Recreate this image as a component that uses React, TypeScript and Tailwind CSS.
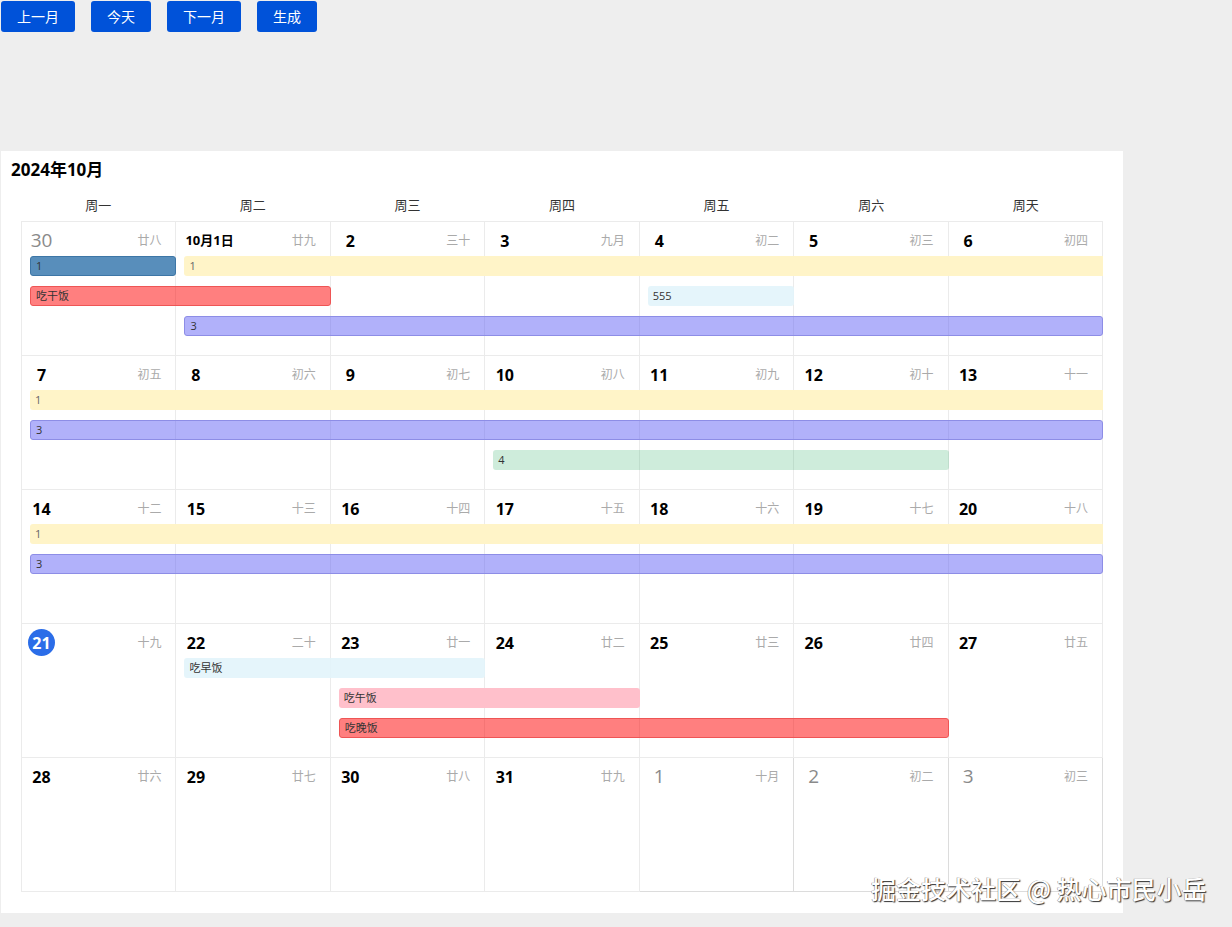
import React from 'react'

type Day = { label: string; lunar: string; kind?: 'other' | 'today' | 'first' }
type Ev = { title: string; start: number; end: number; lane: number; cls: string }

const weeks: Day[][] = [
  [
    { label: '30', lunar: '廿八', kind: 'other' },
    { label: '10月1日', lunar: '廿九', kind: 'first' },
    { label: '2', lunar: '三十' },
    { label: '3', lunar: '九月' },
    { label: '4', lunar: '初二' },
    { label: '5', lunar: '初三' },
    { label: '6', lunar: '初四' },
  ],
  [
    { label: '7', lunar: '初五' },
    { label: '8', lunar: '初六' },
    { label: '9', lunar: '初七' },
    { label: '10', lunar: '初八' },
    { label: '11', lunar: '初九' },
    { label: '12', lunar: '初十' },
    { label: '13', lunar: '十一' },
  ],
  [
    { label: '14', lunar: '十二' },
    { label: '15', lunar: '十三' },
    { label: '16', lunar: '十四' },
    { label: '17', lunar: '十五' },
    { label: '18', lunar: '十六' },
    { label: '19', lunar: '十七' },
    { label: '20', lunar: '十八' },
  ],
  [
    { label: '21', lunar: '十九', kind: 'today' },
    { label: '22', lunar: '二十' },
    { label: '23', lunar: '廿一' },
    { label: '24', lunar: '廿二' },
    { label: '25', lunar: '廿三' },
    { label: '26', lunar: '廿四' },
    { label: '27', lunar: '廿五' },
  ],
  [
    { label: '28', lunar: '廿六' },
    { label: '29', lunar: '廿七' },
    { label: '30', lunar: '廿八' },
    { label: '31', lunar: '廿九' },
    { label: '1', lunar: '十月', kind: 'other' },
    { label: '2', lunar: '初二', kind: 'other' },
    { label: '3', lunar: '初三', kind: 'other' },
  ],
]

const blue = 'bg-[#4682b4]/90 border border-[#3d76a6] rounded-[3px]'
const yellow = 'bg-[#fff4c8] rounded-l-[3px] text-[#666]'
const red = 'bg-[#ff0000]/50 border border-[#e55] rounded-[3px]'
const purple = 'bg-[#6464f5]/50 border border-[#8d8de6] rounded-[3px]'
const cyan = 'bg-[#e2f4fb]/90 rounded-[3px]'
const green = 'bg-[#3cb371]/25 rounded-[3px]'
const pink = 'bg-[#ffc0cb] rounded-[3px]'

const events: Ev[][] = [
  [
    { title: '1', start: 0, end: 0, lane: 0, cls: blue },
    { title: '1', start: 1, end: 6, lane: 0, cls: yellow },
    { title: '吃干饭', start: 0, end: 1, lane: 1, cls: red },
    { title: '555', start: 4, end: 4, lane: 1, cls: cyan },
    { title: '3', start: 1, end: 6, lane: 2, cls: purple },
  ],
  [
    { title: '1', start: 0, end: 6, lane: 0, cls: yellow },
    { title: '3', start: 0, end: 6, lane: 1, cls: purple },
    { title: '4', start: 3, end: 5, lane: 2, cls: green },
  ],
  [
    { title: '1', start: 0, end: 6, lane: 0, cls: yellow },
    { title: '3', start: 0, end: 6, lane: 1, cls: purple },
  ],
  [
    { title: '吃早饭', start: 1, end: 2, lane: 0, cls: cyan },
    { title: '吃午饭', start: 2, end: 3, lane: 1, cls: pink },
    { title: '吃晚饭', start: 2, end: 5, lane: 2, cls: red },
  ],
  [],
]

const colStart = ['col-start-1', 'col-start-2', 'col-start-3', 'col-start-4', 'col-start-5', 'col-start-6', 'col-start-7']
const colEnd = ['col-end-2', 'col-end-3', 'col-end-4', 'col-end-5', 'col-end-6', 'col-end-7', 'col-end-8']
const rowStart = ['row-start-2', 'row-start-3', 'row-start-4']

const weekdays = ['周一', '周二', '周三', '周四', '周五', '周六', '周天']

function DayNumber({ day }: { day: Day }) {
  if (day.kind === 'today') {
    return (
      <span className="flex h-[27px] w-[27px] items-center justify-center rounded-full bg-[#2b6de8] text-[16px] font-bold text-white">
        {day.label}
      </span>
    )
  }
  if (day.kind === 'other') {
    return (
      <span className="flex h-[27px] min-w-[27px] items-center justify-center text-[19px] text-[#8a8a8a]">
        {day.label}
      </span>
    )
  }
  if (day.kind === 'first') {
    return (
      <span className="flex h-[27px] min-w-[27px] items-center justify-center px-[3px] text-[13px] font-bold text-black">
        {day.label}
      </span>
    )
  }
  return (
    <span className="flex h-[27px] min-w-[27px] items-center justify-center text-[16px] font-bold text-black">
      {day.label}
    </span>
  )
}

export default function App() {
  return (
    <div className="relative min-h-[927px] bg-[#eeeeee] font-['Open_Sans','Noto_Sans_CJK_SC',sans-serif]">
      <div className="flex gap-4 pl-px pt-px">
        {['上一月', '今天', '下一月', '生成'].map((t) => (
          <button
            key={t}
            className="h-[31px] rounded-[3px] bg-[#0052d9] px-4 text-[14px] text-white"
          >
            {t}
          </button>
        ))}
      </div>

      <div className="ml-px mt-[119px] w-[1122px] bg-white pb-[21px] pt-[7px]">
        <h2 className="pl-[10px] text-[17px] font-bold leading-[24px] text-black">2024年10月</h2>

        <div className="ml-[20px] mt-[8px] w-[1082px]">
          <div className="grid h-[31px] grid-cols-7 items-center text-center text-[13px] text-[#333]">
            {weekdays.map((w) => (
              <div key={w}>{w}</div>
            ))}
          </div>

          <div className="border-l border-t border-[#ebebeb]">
            {weeks.map((week, wi) => (
              <div
                key={wi}
                className="grid h-[134px] grid-cols-7 grid-rows-[34px_30px_30px_30px_1fr]"
              >
                {week.map((day, di) => (
                  <div
                    key={di}
                    className={`${colStart[di]} row-span-full border-b border-r ${
                      day.kind === 'other' && wi === 4 ? 'border-[#dcdcdc]' : 'border-[#ebebeb]'
                    }`}
                  >
                    <div className="flex items-center justify-between pl-[6px] pr-[14px] pt-[5px]">
                      <DayNumber day={day} />
                      <span className="text-[12px] text-[#aaaaaa]">{day.lunar}</span>
                    </div>
                  </div>
                ))}
                {events[wi].map((ev, ei) => (
                  <div
                    key={ei}
                    className={`${colStart[ev.start]} ${colEnd[ev.end]} ${rowStart[ev.lane]} ${ev.cls} ml-[8px] flex h-[20px] items-center self-start overflow-hidden pl-[5px] text-[11px] text-[#333]`}
                  >
                    {ev.title}
                  </div>
                ))}
              </div>
            ))}
          </div>
        </div>
      </div>

      <div className="absolute left-[871px] top-[873px] whitespace-nowrap font-['Noto_Sans_CJK_SC',sans-serif] text-[25px] font-medium leading-[30px] text-white [text-shadow:1px_1px_1px_#333,-0.5px_-0.5px_0.5px_#888]">
        掘金技术社区 @ 热心市民小岳
      </div>
    </div>
  )
}
